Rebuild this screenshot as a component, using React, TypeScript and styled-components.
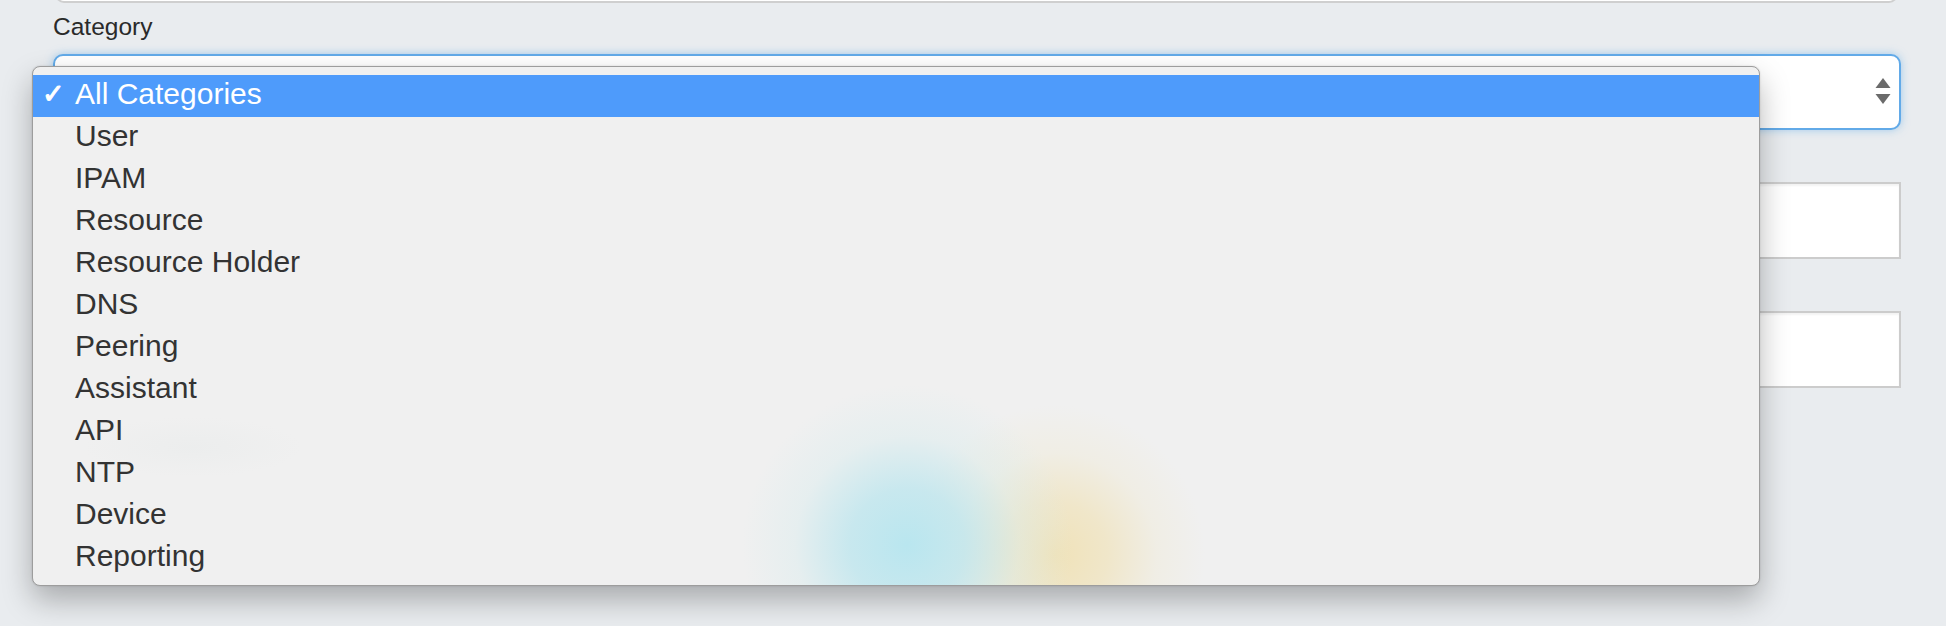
import React from "react";
import styled, { createGlobalStyle } from "styled-components";

const Global = createGlobalStyle`
  html, body {
    margin: 0;
    padding: 0;
    background: #e9ecef;
    width: 1946px;
    height: 626px;
    overflow: hidden;
  }
  * { box-sizing: border-box; }
`;

const Page = styled.div`
  position: relative;
  width: 1946px;
  height: 626px;
  background: #e9ecef;
  font-family: "Liberation Sans", Arial, sans-serif;
`;

const Form = styled.div`
  display: flex;
  flex-direction: column;
  padding: 0 45px 0 53px;
`;

const Field = styled.div<{ $gap?: number }>`
  display: flex;
  flex-direction: column;
  margin-top: ${(p) => p.$gap ?? 0}px;
`;

const TopInput = styled.div`
  height: 76px;
  margin-top: -73px;
  margin-left: 2px;
  margin-right: 3px;
  background: #fff;
  border: 2px solid #cfcfcf;
  border-radius: 9px;
`;

const Label = styled.label`
  margin-top: 10px;
  font-size: 24.5px;
  line-height: 28px;
  color: #2a2a2a;
`;

const Select = styled.div`
  position: relative;
  margin-top: 13px;
  height: 76px;
  background: #fff;
  border: 2px solid #62aae8;
  border-radius: 10px;
  box-shadow: 0 0 9px rgba(102, 175, 233, 0.55);
  display: flex;
  align-items: center;
  justify-content: flex-end;
  padding-right: 8px;
`;

const Arrows = styled.svg`
  display: block;
`;

const Input = styled.div`
  height: 77px;
  background: #fff;
  border: 2px solid #cccccc;
  box-shadow: inset 0 2px 2px rgba(0, 0, 0, 0.05);
`;

const Menu = styled.div`
  position: absolute;
  left: 32px;
  top: 66px;
  width: 1728px;
  height: 520px;
  padding: 8px 0;
  border: 1px solid #9d9d9d;
  border-radius: 8px;
  background:
    radial-gradient(ellipse 165px 160px at 874px 478px, rgba(185, 230, 239, 1), rgba(190, 230, 238, 0.8) 35%, rgba(215, 236, 238, 0.4) 68%, rgba(240, 240, 240, 0) 100%),
    radial-gradient(ellipse 150px 150px at 1022px 488px, rgba(240, 226, 184, 1), rgba(240, 228, 192, 0.8) 35%, rgba(240, 234, 212, 0.4) 68%, rgba(240, 240, 240, 0) 100%),
    radial-gradient(ellipse 110px 30px at 160px 380px, rgba(228, 232, 232, 0.35), rgba(240, 240, 240, 0) 100%),
    #f0f0f0;
  box-shadow: 0 14px 30px rgba(0, 0, 0, 0.28), 0 0 2px rgba(0, 0, 0, 0.15);
  overflow: hidden;
`;

const Item = styled.div<{ $active?: boolean }>`
  display: flex;
  height: 42px;
  line-height: 37px;
  padding-bottom: 5px;
  font-size: 30px;
  color: ${(p) => (p.$active ? "#ffffff" : "#333333")};
  background: ${(p) => (p.$active ? "#4e9bfb" : "transparent")};
`;

const CheckSlot = styled.span`
  width: 42px;
  padding-left: 9px;
  font-size: 27px;
  font-family: "DejaVu Sans", sans-serif;
  -webkit-text-stroke: 1px currentColor;
`;

const categories = [
  "All Categories",
  "User",
  "IPAM",
  "Resource",
  "Resource Holder",
  "DNS",
  "Peering",
  "Assistant",
  "API",
  "NTP",
  "Device",
  "Reporting",
];

export default function App() {
  return (
    <Page>
      <Global />
      <Form>
        <TopInput />
        <Field>
          <Label>Category</Label>
          <Select>
            <Arrows width="16" height="28" viewBox="0 0 16 28">
              <polygon points="8,0 15.5,10 0.5,10" fill="#6b6b6b" />
              <polygon points="0.5,16 15.5,16 8,26" fill="#6b6b6b" />
            </Arrows>
          </Select>
        </Field>
        <Field $gap={52}>
          <Input />
        </Field>
        <Field $gap={52}>
          <Input />
        </Field>
      </Form>
      <Menu>
        {categories.map((c, i) => (
          <Item key={c} $active={i === 0}>
            <CheckSlot>{i === 0 ? "✓" : ""}</CheckSlot>
            <span>{c}</span>
          </Item>
        ))}
      </Menu>
    </Page>
  );
}
